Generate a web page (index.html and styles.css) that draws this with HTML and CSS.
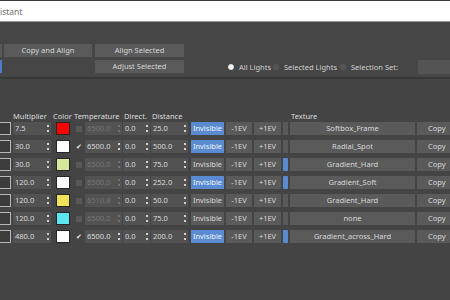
FILE: index.html
```html
<!DOCTYPE html>
<html lang="en">
<head>
    <meta charset="UTF-8">
    <title>Light Assistant</title>
    <link rel="stylesheet" href="styles.css">
</head>
<body>
    <div class="titlebar"><span class="title-text">istant</span></div>

    <div class="toolbar">
        <div class="tool-row">
            <span class="cut-btn"></span>
            <button class="btn btn-wide">Copy and Align</button>
            <button class="btn btn-mid">Align Selected</button>
        </div>
        <div class="tool-row">
            <span class="cut-btn cut-blue"></span>
            <span class="btn-space"></span>
            <button class="btn btn-mid">Adjust Selected</button>
            <div class="radios">
                <label class="radio-item r-all"><span class="radio on"></span>All Lights</label>
                <label class="radio-item r-sel"><span class="radio"></span>Selected Lights</label>
                <label class="radio-item"><span class="radio"></span>Selection Set:</label>
            </div>
            <span class="set-input"></span>
        </div>
    </div>

    <div class="lights">
        <div class="head-row">
            <span class="h-mult">Multiplier</span>
            <span class="h-color">Color</span>
            <span class="h-temp">Temperature</span>
            <span class="h-dir">Direct.</span>
            <span class="h-dist">Distance</span>
            <span class="h-tex">Texture</span>
        </div>

        <div class="light-row">
            <span class="cell-box"></span>
            <span class="spin c-mult">7.5<i class="arrows"></i></span>
            <span class="swatch" style="background:#ff0000"></span>
            <span class="check"></span>
            <span class="spin c-temp off">6500.0<i class="arrows"></i></span>
            <span class="spin c-dir">0.0<i class="arrows"></i></span>
            <span class="spin c-dist">25.0<i class="arrows"></i></span>
            <button class="btn c-inv active">Invisible</button>
            <button class="btn c-ev">-1EV</button>
            <button class="btn c-ev2">+1EV</button>
            <span class="bar"></span>
            <button class="btn c-tex">Softbox_Frame</button>
            <button class="btn c-copy">Copy</button>
        </div>

        <div class="light-row">
            <span class="cell-box"></span>
            <span class="spin c-mult">30.0<i class="arrows"></i></span>
            <span class="swatch" style="background:#ffffff"></span>
            <span class="check checked">&#10004;</span>
            <span class="spin c-temp">6500.0<i class="arrows"></i></span>
            <span class="spin c-dir">0.0<i class="arrows"></i></span>
            <span class="spin c-dist">500.0<i class="arrows"></i></span>
            <button class="btn c-inv active">Invisible</button>
            <button class="btn c-ev">-1EV</button>
            <button class="btn c-ev2">+1EV</button>
            <span class="bar"></span>
            <button class="btn c-tex">Radial_Spot</button>
            <button class="btn c-copy">Copy</button>
        </div>

        <div class="light-row">
            <span class="cell-box"></span>
            <span class="spin c-mult">30.0<i class="arrows"></i></span>
            <span class="swatch" style="background:#d6e69a"></span>
            <span class="check"></span>
            <span class="spin c-temp off">6500.0<i class="arrows"></i></span>
            <span class="spin c-dir">0.0<i class="arrows"></i></span>
            <span class="spin c-dist">75.0<i class="arrows"></i></span>
            <button class="btn c-inv">Invisible</button>
            <button class="btn c-ev">-1EV</button>
            <button class="btn c-ev2">+1EV</button>
            <span class="bar blue"></span>
            <button class="btn c-tex">Gradient_Hard</button>
            <button class="btn c-copy">Copy</button>
        </div>

        <div class="light-row">
            <span class="cell-box"></span>
            <span class="spin c-mult">120.0<i class="arrows"></i></span>
            <span class="swatch" style="background:#ffffff"></span>
            <span class="check"></span>
            <span class="spin c-temp off">6500.0<i class="arrows"></i></span>
            <span class="spin c-dir">0.0<i class="arrows"></i></span>
            <span class="spin c-dist">252.0<i class="arrows"></i></span>
            <button class="btn c-inv active">Invisible</button>
            <button class="btn c-ev">-1EV</button>
            <button class="btn c-ev2">+1EV</button>
            <span class="bar blue"></span>
            <button class="btn c-tex">Gradient_Soft</button>
            <button class="btn c-copy">Copy</button>
        </div>

        <div class="light-row">
            <span class="cell-box"></span>
            <span class="spin c-mult">120.0<i class="arrows"></i></span>
            <span class="swatch" style="background:#f2e25a"></span>
            <span class="check"></span>
            <span class="spin c-temp off">6510.8<i class="arrows"></i></span>
            <span class="spin c-dir">0.0<i class="arrows"></i></span>
            <span class="spin c-dist">50.0<i class="arrows"></i></span>
            <button class="btn c-inv">Invisible</button>
            <button class="btn c-ev">-1EV</button>
            <button class="btn c-ev2">+1EV</button>
            <span class="bar"></span>
            <button class="btn c-tex">Gradient_Hard</button>
            <button class="btn c-copy">Copy</button>
        </div>

        <div class="light-row">
            <span class="cell-box"></span>
            <span class="spin c-mult">120.0<i class="arrows"></i></span>
            <span class="swatch" style="background:#5ce6ee"></span>
            <span class="check"></span>
            <span class="spin c-temp off">6500.0<i class="arrows"></i></span>
            <span class="spin c-dir">0.0<i class="arrows"></i></span>
            <span class="spin c-dist">75.0<i class="arrows"></i></span>
            <button class="btn c-inv">Invisible</button>
            <button class="btn c-ev">-1EV</button>
            <button class="btn c-ev2">+1EV</button>
            <span class="bar"></span>
            <button class="btn c-tex">none</button>
            <button class="btn c-copy">Copy</button>
        </div>

        <div class="light-row">
            <span class="cell-box"></span>
            <span class="spin c-mult">480.0<i class="arrows"></i></span>
            <span class="swatch" style="background:#ffffff"></span>
            <span class="check checked">&#10004;</span>
            <span class="spin c-temp">6500.0<i class="arrows"></i></span>
            <span class="spin c-dir">0.0<i class="arrows"></i></span>
            <span class="spin c-dist">200.0<i class="arrows"></i></span>
            <button class="btn c-inv active">Invisible</button>
            <button class="btn c-ev">-1EV</button>
            <button class="btn c-ev2">+1EV</button>
            <span class="bar blue"></span>
            <button class="btn c-tex">Gradient_across_Hard</button>
            <button class="btn c-copy">Copy</button>
        </div>
    </div>
</body>
</html>
```

FILE: styles.css
```css
body {
    margin: 0;
    width: 450px;
    height: 300px;
    overflow: hidden;
    background-color: #444444;
    font-family: "Noto Sans", "Open Sans", sans-serif;
    font-size: 7.5px;
    color: #d8d8d8;
}

.titlebar {
    height: 20px;
    border-top: 1px solid #3a3a3a;
    border-bottom: 1px solid #9a9a9a;
    background-color: #ffffff;
    display: flex;
    align-items: center;
}

.title-text {
    color: #707070;
    font-size: 8.5px;
}

/* top toolbar */
.toolbar {
    padding-top: 22px;
    padding-bottom: 4px;
    border-bottom: 2px solid #383838;
    background-color: #464646;
    display: flex;
    flex-direction: column;
    gap: 3px;
}

.tool-row {
    display: flex;
    align-items: center;
    height: 13px;
}

.btn {
    font-family: inherit;
    font-size: 7.5px;
    color: #d8d8d8;
    background-color: #5a5a5a;
    border: none;
    padding: 0;
    height: 13px;
    line-height: 13px;
    text-align: center;
    white-space: nowrap;
    overflow: hidden;
    flex-shrink: 0;
}

.cut-btn {
    width: 2px;
    height: 13px;
    background-color: #5a5a5a;
    margin-right: 2px;
    flex-shrink: 0;
}

.cut-blue {
    background-color: #4d7fc4;
}

.btn-wide {
    width: 88px;
}

.btn-space {
    width: 88px;
    flex-shrink: 0;
}

.btn-mid {
    width: 89px;
    margin-left: 3px;
}

.radios {
    display: flex;
    align-items: center;
    margin-left: 43px;
    flex-shrink: 0;
    white-space: nowrap;
}

.radio-item {
    display: flex;
    align-items: center;
    color: #d0d0d0;
}

.r-all { width: 45px; }
.r-sel { width: 67px; }

.radio {
    width: 6px;
    height: 6px;
    border-radius: 50%;
    background-color: #555555;
    border: 1px solid #4a4a4a;
    margin-right: 4px;
    flex-shrink: 0;
}

.radio.on {
    background-color: #f2f2f2;
    border-color: #333333;
}

.set-input {
    width: 32px;
    height: 14px;
    background-color: #545454;
    margin-left: auto;
    flex-shrink: 0;
}

/* light table */
.lights {
    padding-top: 31px;
}

.head-row {
    display: flex;
    height: 12px;
    line-height: 12px;
    padding-left: 13px;
    color: #dcdcdc;
}

.head-row span {
    flex-shrink: 0;
}

.h-mult { width: 40px; }
.h-color { width: 21px; }
.h-temp { width: 50px; }
.h-dir { width: 28px; }
.h-dist { width: 139px; }

.light-row {
    display: flex;
    align-items: center;
    height: 13px;
    margin-bottom: 5px;
}

.cell-box {
    width: 10px;
    height: 11px;
    margin-left: -1px;
    border: 1px solid #b8b8b8;
    background-color: #3c3c3c;
    flex-shrink: 0;
}

.spin {
    height: 13px;
    line-height: 13px;
    background-color: #525252;
    padding-left: 2px;
    box-sizing: border-box;
    display: flex;
    align-items: center;
    justify-content: space-between;
    flex-shrink: 0;
    color: #dadada;
}

.spin.off {
    color: #767676;
}

.arrows {
    width: 3px;
    height: 7px;
    margin-right: 2px;
    background:
        linear-gradient(#cfcfcf, #cfcfcf) top / 2px 2px no-repeat,
        linear-gradient(#cfcfcf, #cfcfcf) bottom / 2px 2px no-repeat;
}

.spin.off .arrows {
    background:
        linear-gradient(#707070, #707070) top / 2px 2px no-repeat,
        linear-gradient(#707070, #707070) bottom / 2px 2px no-repeat;
}

.c-mult { width: 38px; margin-left: 2px; }
.c-temp { width: 37px; margin-left: 3px; }
.c-dir { width: 27px; margin-left: 1px; }
.c-dist { width: 37px; margin-left: 1px; }

.swatch {
    width: 12px;
    height: 11px;
    border: 1px solid #262626;
    margin-left: 5px;
    flex-shrink: 0;
}

.check {
    width: 6px;
    height: 6px;
    margin-left: 6px;
    background-color: #585858;
    flex-shrink: 0;
    font-size: 7px;
    line-height: 6px;
    text-align: center;
    color: #e8e8e8;
}

.check.checked {
    background-color: transparent;
}

.c-inv {
    width: 33px;
    margin-left: 3px;
}

.c-inv.active {
    background-color: #5a8bd0;
    color: #eef3fb;
}

.c-ev {
    width: 26px;
    margin-left: 2px;
}

.c-ev2 {
    width: 27px;
    margin-left: 2px;
}

.bar {
    width: 5px;
    height: 13px;
    margin-left: 2px;
    background-color: #595959;
    flex-shrink: 0;
}

.bar.blue {
    background-color: #5a8bd0;
    border-radius: 1px;
}

.c-tex {
    width: 125px;
    margin-left: 2px;
}

.c-copy {
    width: 40px;
    margin-left: 2px;
    text-align: left;
    padding-left: 11px;
}
```
